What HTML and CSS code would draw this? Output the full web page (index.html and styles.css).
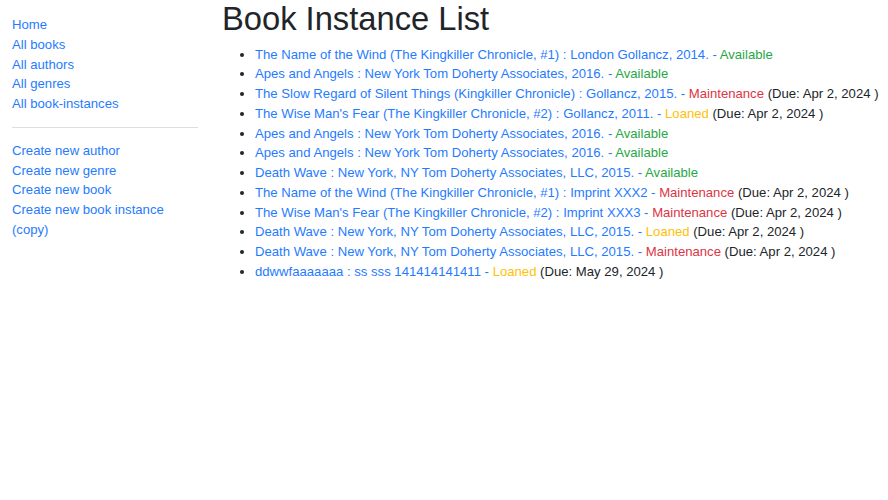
FILE: index.html
```
<!DOCTYPE html>
<html lang="en">
<head>
<meta charset="utf-8">
<title>Local Library</title>
<link rel="stylesheet" href="styles.css">
</head>
<body>
<div class="container">
  <div class="sidebar">
    <ul class="sidebar-nav">
      <li><a href="#">Home</a></li>
      <li><a href="#">All books</a></li>
      <li><a href="#">All authors</a></li>
      <li><a href="#">All genres</a></li>
      <li><a href="#">All book-instances</a></li>
      <li><hr></li>
      <li><a href="#">Create new author</a></li>
      <li><a href="#">Create new genre</a></li>
      <li><a href="#">Create new book</a></li>
      <li><a href="#">Create new book instance (copy)</a></li>
    </ul>
  </div>
  <div class="content">
    <h1>Book Instance List</h1>
    <ul class="list">
      <li><a href="#">The Name of the Wind (The Kingkiller Chronicle, #1) : London Gollancz, 2014. -</a> <span class="ok">Available</span></li>
      <li><a href="#">Apes and Angels : New York Tom Doherty Associates, 2016. -</a> <span class="ok">Available</span></li>
      <li><a href="#">The Slow Regard of Silent Things (Kingkiller Chronicle) : Gollancz, 2015. -</a> <span class="bad">Maintenance</span> (Due: Apr 2, 2024 )</li>
      <li><a href="#">The Wise Man's Fear (The Kingkiller Chronicle, #2) : Gollancz, 2011. -</a> <span class="warn">Loaned</span> (Due: Apr 2, 2024 )</li>
      <li><a href="#">Apes and Angels : New York Tom Doherty Associates, 2016. -</a> <span class="ok">Available</span></li>
      <li><a href="#">Apes and Angels : New York Tom Doherty Associates, 2016. -</a> <span class="ok">Available</span></li>
      <li><a href="#">Death Wave : New York, NY Tom Doherty Associates, LLC, 2015. -</a> <span class="ok">Available</span></li>
      <li><a href="#">The Name of the Wind (The Kingkiller Chronicle, #1) : Imprint XXX2 -</a> <span class="bad">Maintenance</span> (Due: Apr 2, 2024 )</li>
      <li><a href="#">The Wise Man's Fear (The Kingkiller Chronicle, #2) : Imprint XXX3 -</a> <span class="bad">Maintenance</span> (Due: Apr 2, 2024 )</li>
      <li><a href="#">Death Wave : New York, NY Tom Doherty Associates, LLC, 2015. -</a> <span class="warn">Loaned</span> (Due: Apr 2, 2024 )</li>
      <li><a href="#">Death Wave : New York, NY Tom Doherty Associates, LLC, 2015. -</a> <span class="bad">Maintenance</span> (Due: Apr 2, 2024 )</li>
      <li><a href="#">ddwwfaaaaaaa : ss sss 141414141411 -</a> <span class="warn">Loaned</span> (Due: May 29, 2024 )</li>
    </ul>
  </div>
</div>
</body>
</html>
```
FILE: styles.css
```
html, body {
  margin: 0;
  padding: 0;
  background: #fff;
}
body {
  font-family: "Liberation Sans", Arial, sans-serif;
  font-size: 13.14px;
  line-height: 19.75px;
  color: #212529;
}
a {
  color: #1f7bff;
  text-decoration: none;
}
.container {
  display: grid;
  grid-template-columns: 210px 1fr;
}
.sidebar {
  padding: 0 12px;
}
.content {
  padding: 0 0 0 12px;
}
.sidebar-nav {
  list-style: none;
  margin: 15px 0 0;
  padding: 0;
}
.sidebar-nav hr {
  margin: 13.1px 0;
  border: 0;
  border-top: 1px solid #dedede;
  height: 0;
}
h1 {
  margin: 0 0 7.3px;
  font-size: 32.7px;
  font-weight: 500;
  line-height: 37.3px;
}
.list {
  margin: 0;
  padding-left: 33px;
}
.ok { color: #28a745; }
.bad { color: #dc3545; }
.warn { color: #ffc107; }
```
